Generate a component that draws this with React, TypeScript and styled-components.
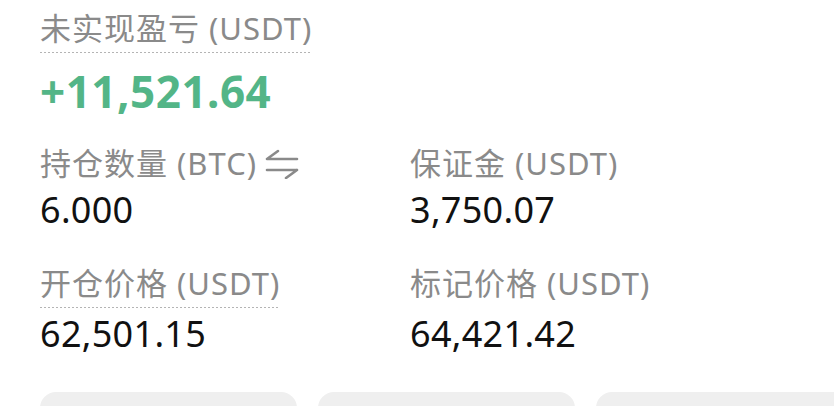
import React from 'react'
import styled, { createGlobalStyle } from 'styled-components'

const GlobalStyle = createGlobalStyle`
  html, body {
    margin: 0;
    padding: 0;
    background: #ffffff;
  }
  body {
    font-family: 'Noto Sans', 'Noto Sans CJK SC', sans-serif;
    -webkit-font-smoothing: antialiased;
  }
`

const Page = styled.div`
  width: 834px;
  height: 406px;
  overflow: hidden;
  padding: 8px 0 0 40px;
  box-sizing: border-box;
`

const Hero = styled.div`
  display: flex;
  flex-direction: column;
  align-items: flex-start;
  margin-bottom: 28px;
`

const Grid = styled.div`
  display: grid;
  grid-template-columns: 370px 1fr;
  row-gap: 31px;
`

const Value = styled.div`
  font-family: 'Noto Sans', sans-serif;
  font-size: 36px;
  line-height: 44px;
  letter-spacing: 0.3px;
  color: #111111;
`

const Field = styled.div<{ $tight?: boolean }>`
  display: flex;
  flex-direction: column;
  align-items: flex-start;

  ${Value} {
    margin-top: ${p => (p.$tight ? -4 : 0)}px;
  }
`

const Label = styled.span<{ dotted?: boolean }>`
  display: inline-flex;
  align-items: center;
  font-family: 'Noto Sans', 'Noto Sans CJK SC', sans-serif;
  font-size: 31px;
  line-height: 40px;
  letter-spacing: 1px;
  color: #8a8a8a;
  padding-bottom: 9px;
  background-image: ${p =>
    p.dotted
      ? 'repeating-linear-gradient(to right, #b4b4b4 0 2px, transparent 2px 4px)'
      : 'none'};
  background-size: 100% 1px;
  background-position: left bottom 4px;
  background-repeat: no-repeat;
`

const BigValue = styled.div`
  margin-top: 10px;
  font-family: 'Noto Sans', sans-serif;
  font-weight: 700;
  font-size: 44px;
  line-height: 48px;
  letter-spacing: 0.5px;
  color: #53b587;
`

const Swap = styled.svg`
  margin-left: 8px;
  width: 34px;
  height: 32px;
`

const Actions = styled.div`
  display: flex;
  gap: 21px;
  margin-top: 36px;
`

const ActionButton = styled.div`
  flex: 0 0 257px;
  height: 60px;
  border-radius: 16px;
  background: #efefef;
`

const SwapIcon = () => (
  <Swap viewBox="0 0 34 32" fill="none" stroke="#8a8a8a" strokeWidth={2.6} strokeLinecap="round">
    <path d="M2 12 H32 M2 12 L13 4" />
    <path d="M2 23 H32 M32 23 L21 31" />
  </Swap>
)

export default function App() {
  return (
    <Page>
      <GlobalStyle />
      <Hero>
        <Label dotted>未实现盈亏 (USDT)</Label>
        <BigValue>+11,521.64</BigValue>
      </Hero>
      <Grid>
        <Field $tight>
          <Label>
            持仓数量 (BTC)
            <SwapIcon />
          </Label>
          <Value>6.000</Value>
        </Field>
        <Field $tight>
          <Label>保证金 (USDT)</Label>
          <Value>3,750.07</Value>
        </Field>
        <Field>
          <Label dotted>开仓价格 (USDT)</Label>
          <Value>62,501.15</Value>
        </Field>
        <Field>
          <Label>标记价格 (USDT)</Label>
          <Value>64,421.42</Value>
        </Field>
      </Grid>
      <Actions>
        <ActionButton />
        <ActionButton />
        <ActionButton />
      </Actions>
    </Page>
  )
}
